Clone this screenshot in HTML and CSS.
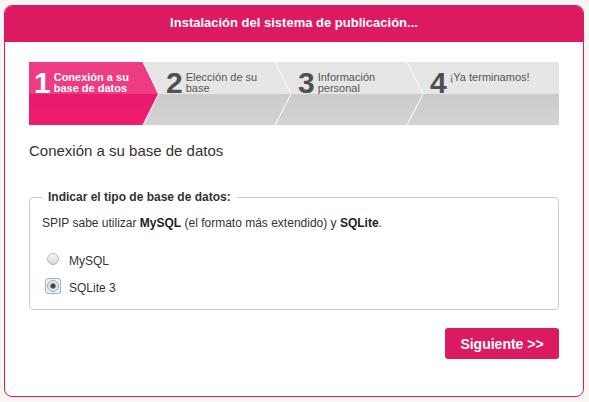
FILE: index.html
```html
<!DOCTYPE html>
<html lang="es">
<head>
<meta charset="utf-8">
<title>Instalación</title>
<link rel="stylesheet" href="styles.css">
</head>
<body>
<div class="card">
  <div class="card-header">Instalación del sistema de publicación...</div>
  <div class="card-body">
    <div class="steps">
      <svg class="steps-bg" width="530" height="63" viewBox="0 0 530 63" aria-hidden="true">
        <defs>
          <linearGradient id="pinkLow" x1="0" y1="0" x2="0" y2="1">
            <stop offset="0" stop-color="#d6165f"/>
            <stop offset="0.35" stop-color="#e51a69"/>
            <stop offset="1" stop-color="#ef1c70"/>
          </linearGradient>
          <linearGradient id="greyLow" x1="0" y1="0" x2="0" y2="1">
            <stop offset="0" stop-color="#cbcbcb"/>
            <stop offset="1" stop-color="#d3d3d3"/>
          </linearGradient>
        </defs>
        <rect x="0" y="0" width="530" height="32" fill="#e6e6e6"/>
        <rect x="0" y="32" width="530" height="31" fill="url(#greyLow)"/>
        <polygon points="0,0 114,0 129.5,32 114,63 0,63" fill="url(#pinkLow)"/>
        <polygon points="0,0 114,0 129.5,32 0,32" fill="#ee3c82"/>
        <polyline points="114,0 129.5,32 114,63" fill="none" stroke="#fff" stroke-width="1"/>
        <polyline points="246,0 262,32 246,63" fill="none" stroke="#fff" stroke-width="1"/>
        <polyline points="378,0 394,32 378,63" fill="none" stroke="#fff" stroke-width="1"/>
      </svg>
      <div class="step active"><span class="num">1</span><span class="label">Conexión a su<br>base de datos</span></div>
      <div class="step"><span class="num">2</span><span class="label">Elección de su<br>base</span></div>
      <div class="step"><span class="num">3</span><span class="label">Información<br>personal</span></div>
      <div class="step"><span class="num">4</span><span class="label">¡Ya terminamos!</span></div>
    </div>

    <h2 class="title">Conexión a su base de datos</h2>

    <fieldset class="box">
      <legend>Indicar el tipo de base de datos:</legend>
      <p class="desc">SPIP sabe utilizar <strong>MySQL</strong> (el formato más extendido) y <strong>SQLite</strong>.</p>
      <div class="options">
        <label class="opt"><span class="ring"><input type="radio" name="db" value="mysql"></span><span>MySQL</span></label>
        <label class="opt"><span class="ring focus"><input type="radio" name="db" value="sqlite" checked></span><span>SQLite 3</span></label>
      </div>
    </fieldset>

    <div class="actions">
      <button type="button" class="btn">Siguiente &gt;&gt;</button>
    </div>
  </div>
</div>
</body>
</html>
```

FILE: styles.css
```css
html, body {
  margin: 0;
  padding: 0;
}
body {
  background: #f7f6f2;
  font-family: "Liberation Sans", Arial, sans-serif;
  color: #333;
  padding: 5px 5px 0 4px;
}
.card {
  width: 578px;
  height: 390px;
  border: 1px solid #dc1a62;
  border-radius: 8px;
  background: #fff;
  overflow: hidden;
}
.card-header {
  height: 36px;
  background: #dc1a62;
  color: #fff;
  font-weight: bold;
  font-size: 13px;
  line-height: 34px;
  text-align: center;
}
.card-body {
  padding: 20px 24px 0 24px;
}
.steps {
  position: relative;
  height: 63px;
  display: flex;
}
.steps-bg {
  position: absolute;
  left: 0;
  top: 0;
}
.step {
  position: relative;
  width: 132px;
  box-sizing: border-box;
  padding: 6px 0 0 5px;
  display: flex;
  align-items: flex-start;
  gap: 3px;
  color: #555;
}
.step .num {
  font-size: 30px;
  line-height: 30px;
  font-weight: bold;
  color: #505050;
}
.step .label {
  font-size: 11px;
  line-height: 10.5px;
  margin-top: 4px;
}
.step.active {
  color: #fff;
}
.step.active .num {
  color: #fff;
}
.step.active .label {
  font-weight: bold;
}
.title {
  margin: 17px 0 0 0;
  font-size: 15px;
  line-height: 18px;
  font-weight: normal;
  color: #333;
}
.box {
  margin: 30px 0 0 0;
  padding: 11px 12px 12px 12px;
  border: 1px solid #ccc;
  border-radius: 4px;
}
.box legend {
  padding: 0 6px;
  font-size: 12px;
  font-weight: bold;
  color: #333;
}
.desc {
  margin: 0;
  font-size: 12px;
  line-height: 16px;
}
.desc strong {
  color: #222;
}
.options {
  margin-top: 21px;
  display: flex;
  flex-direction: column;
  gap: 9px;
}
.opt {
  display: flex;
  align-items: center;
  gap: 8px;
  font-size: 12px;
  height: 18px;
  padding-left: 3px;
}
.ring {
  display: flex;
  align-items: center;
  justify-content: center;
  width: 16px;
  height: 16px;
  box-sizing: border-box;
  border-radius: 3px;
  border: 1px solid transparent;
  position: relative;
  top: -2px;
}
.ring.focus {
  border-color: #8fb3ec;
  background: #eef2fa;
}
.opt input {
  appearance: none;
  -webkit-appearance: none;
  margin: 0;
  width: 12px;
  height: 12px;
  border-radius: 50%;
  border: 1px solid #b5b5b5;
  background: linear-gradient(#f6f6f6, #d9d9d9);
  box-sizing: border-box;
}
.opt input:checked {
  border-color: #a8a8a8;
  background: radial-gradient(circle, #474747 0 2.2px, #dadada 3px, #ececec 5px);
}
.actions {
  display: flex;
  justify-content: flex-end;
  margin-top: 18px;
}
.btn {
  width: 114px;
  height: 31px;
  border: 0;
  border-radius: 3px;
  background: #dc1a62;
  color: #fff;
  font-family: "Liberation Sans", Arial, sans-serif;
  font-weight: bold;
  font-size: 14px;
  padding: 0;
}
```
